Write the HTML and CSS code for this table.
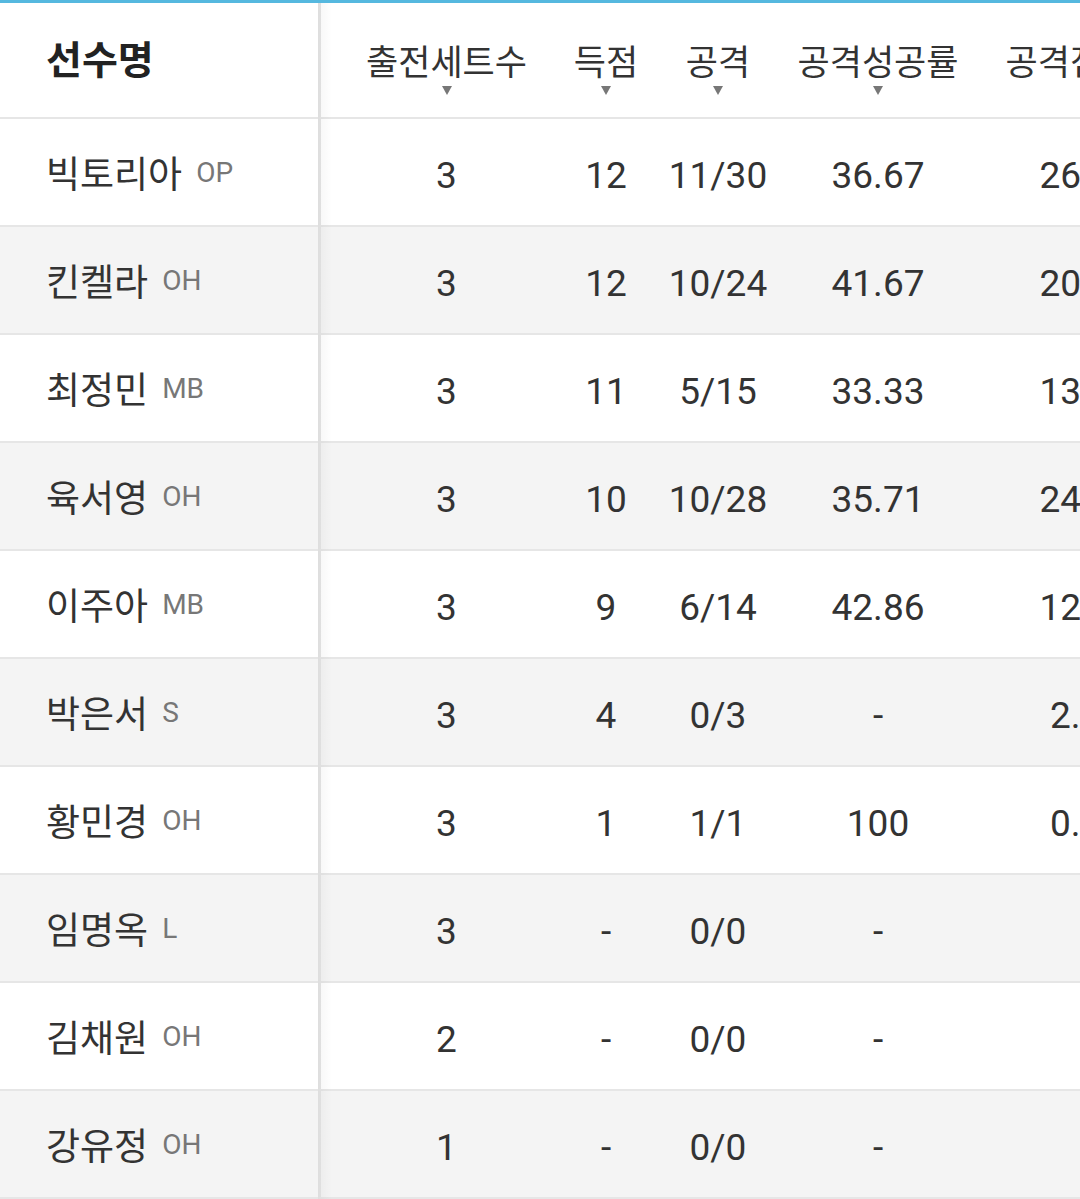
FILE: index.html
```html
<!DOCTYPE html>
<html lang="ko">
<head>
<meta charset="utf-8">
<link rel="stylesheet" href="styles.css">
</head>
<body>
<div class="wrap">
  <div class="table">
    <div class="row head">
      <div class="cell name"><span class="title">선수명</span></div>
      <div class="cell col"><span class="h">출전세트수</span><span class="tri"></span></div>
      <div class="cell col"><span class="h">득점</span><span class="tri"></span></div>
      <div class="cell col"><span class="h">공격</span><span class="tri"></span></div>
      <div class="cell col"><span class="h">공격성공률</span><span class="tri"></span></div>
      <div class="cell col"><span class="h">공격점유율</span><span class="tri"></span></div>
    </div>
    <div class="row">
      <div class="cell name"><span class="pn">빅토리아</span><span class="pos">OP</span></div>
      <div class="cell num">3</div><div class="cell num">12</div><div class="cell num">11/30</div><div class="cell num">36.67</div><div class="cell num">26.09</div>
    </div>
    <div class="row alt">
      <div class="cell name"><span class="pn">킨켈라</span><span class="pos">OH</span></div>
      <div class="cell num">3</div><div class="cell num">12</div><div class="cell num">10/24</div><div class="cell num">41.67</div><div class="cell num">20.87</div>
    </div>
    <div class="row">
      <div class="cell name"><span class="pn">최정민</span><span class="pos">MB</span></div>
      <div class="cell num">3</div><div class="cell num">11</div><div class="cell num">5/15</div><div class="cell num">33.33</div><div class="cell num">13.04</div>
    </div>
    <div class="row alt">
      <div class="cell name"><span class="pn">육서영</span><span class="pos">OH</span></div>
      <div class="cell num">3</div><div class="cell num">10</div><div class="cell num">10/28</div><div class="cell num">35.71</div><div class="cell num">24.35</div>
    </div>
    <div class="row">
      <div class="cell name"><span class="pn">이주아</span><span class="pos">MB</span></div>
      <div class="cell num">3</div><div class="cell num">9</div><div class="cell num">6/14</div><div class="cell num">42.86</div><div class="cell num">12.17</div>
    </div>
    <div class="row alt">
      <div class="cell name"><span class="pn">박은서</span><span class="pos">S</span></div>
      <div class="cell num">3</div><div class="cell num">4</div><div class="cell num">0/3</div><div class="cell num">-</div><div class="cell num">2.61</div>
    </div>
    <div class="row">
      <div class="cell name"><span class="pn">황민경</span><span class="pos">OH</span></div>
      <div class="cell num">3</div><div class="cell num">1</div><div class="cell num">1/1</div><div class="cell num">100</div><div class="cell num">0.87</div>
    </div>
    <div class="row alt">
      <div class="cell name"><span class="pn">임명옥</span><span class="pos">L</span></div>
      <div class="cell num">3</div><div class="cell num">-</div><div class="cell num">0/0</div><div class="cell num">-</div><div class="cell num">-</div>
    </div>
    <div class="row">
      <div class="cell name"><span class="pn">김채원</span><span class="pos">OH</span></div>
      <div class="cell num">2</div><div class="cell num">-</div><div class="cell num">0/0</div><div class="cell num">-</div><div class="cell num">-</div>
    </div>
    <div class="row alt">
      <div class="cell name"><span class="pn">강유정</span><span class="pos">OH</span></div>
      <div class="cell num">1</div><div class="cell num">-</div><div class="cell num">0/0</div><div class="cell num">-</div><div class="cell num">-</div>
    </div>
  </div>
</div>
</body>
</html>
```

FILE: styles.css
```css
html, body {
  margin: 0;
  padding: 0;
  background: #ffffff;
}
body {
  font-family: Roboto, "Noto Sans CJK KR", sans-serif;
  color: #333333;
}
.wrap {
  width: 1080px;
  height: 1199px;
  overflow: hidden;
  border-top: 3px solid #55b8df;
  box-sizing: border-box;
}
.table {
  width: 1212px;
}
.row {
  display: grid;
  grid-template-columns: 321px 251px 68px 156px 164px 252px;
  height: 106px;
  border-bottom: 2px solid #e6e6e6;
  background: #ffffff;
}
.row.alt {
  background: #f4f4f4;
}
.row.head {
  height: 114px;
}
.cell {
  display: flex;
  align-items: center;
  justify-content: center;
}
.cell.name {
  position: relative;
  justify-content: flex-start;
  padding-left: 46px;
  border-right: 3px solid #e6e6e6;
  box-sizing: border-box;
}
.cell.name::after {
  content: "";
  position: absolute;
  top: 0;
  bottom: -2px;
  left: 100%;
  width: 14px;
  background: linear-gradient(to right, rgba(0, 0, 0, 0.035), rgba(0, 0, 0, 0));
}
.title {
  font-family: "Noto Sans CJK KR", sans-serif;
  font-weight: 700;
  font-size: 39px;
  color: #222222;
  margin-top: -6px;
}
.cell.col {
  flex-direction: column;
  padding-top: 14px;
}
.h {
  font-family: "Noto Sans CJK KR", sans-serif;
  font-size: 35px;
  color: #333333;
  white-space: nowrap;
  line-height: 40px;
}
.tri {
  display: block;
  width: 0;
  height: 0;
  margin-top: 6px;
  border-left: 5.5px solid transparent;
  border-right: 5.5px solid transparent;
  border-top: 9px solid #777777;
}
.pn {
  font-family: "Noto Sans CJK KR", sans-serif;
  font-size: 37px;
  color: #333333;
}
.pos {
  font-family: Roboto, sans-serif;
  font-size: 28px;
  color: #777777;
  margin-left: 14px;
  padding-top: 1px;
}
.cell.num {
  font-size: 37px;
  color: #333333;
  padding-top: 7px;
  white-space: nowrap;
}
```
